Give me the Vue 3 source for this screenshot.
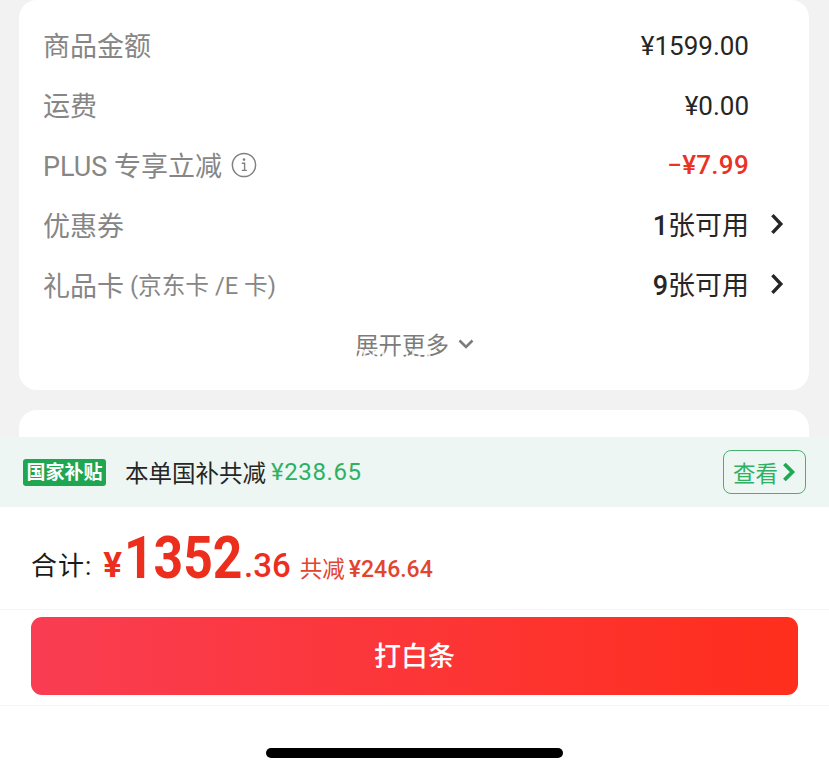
<template>
  <div class="page">
    <div class="card card--top">
      <div class="row" v-for="item in rows" :key="item.label">
        <span class="row__label">
          {{ item.label }}<small v-if="item.note" class="row__note">{{ item.note }}</small>
          <svg v-if="item.info" class="row__info" viewBox="0 0 26 26" width="26" height="26">
            <circle cx="13" cy="13" r="11.6" fill="none" stroke="#808080" stroke-width="1.5" />
            <circle cx="13" cy="7.6" r="1.3" fill="#808080" />
            <path d="M10.8 11.2h2.8v7M10.8 18.4h5" fill="none" stroke="#808080" stroke-width="1.4" />
          </svg>
        </span>
        <span class="row__value" :class="{ 'row__value--red': item.red, 'row__value--link': item.link }">
          <b v-if="item.num" class="row__num">{{ item.num }}</b>{{ item.value }}
          <svg v-if="item.link" class="row__arrow" viewBox="0 0 14 22" width="14" height="22">
            <path d="M2.4 2.2 10.8 11l-8.4 8.8" fill="none" stroke="#262626" stroke-width="3.4" />
          </svg>
        </span>
      </div>
      <div class="more">
        <span>展开更多</span>
        <svg viewBox="0 0 16 10" width="16" height="10">
          <path d="M1.5 1.5 8 8l6.5-6.5" fill="none" stroke="#7c7c7c" stroke-width="2.6" />
        </svg>
        <span class="more__mark">PTUDIO</span>
      </div>
    </div>

    <div class="card card--next"></div>

    <div class="subsidy">
      <span class="subsidy__tag">国家补贴</span>
      <span class="subsidy__text">本单国补共减</span>
      <span class="subsidy__amount">¥238.65</span>
      <span class="subsidy__btn">
        查看
        <svg viewBox="0 0 14 20" width="14" height="20">
          <path d="M2.4 2 10.4 10l-8 8" fill="none" stroke="#1ea952" stroke-width="3.8" />
        </svg>
      </span>
    </div>

    <div class="total">
      <span class="total__label">合计:</span>
      <span class="total__yen">¥</span>
      <span class="total__int">1352</span>
      <span class="total__dec">.36</span>
      <span class="total__off">共减</span>
      <span class="total__offnum">¥246.64</span>
    </div>

    <div class="action">
      <button class="pay">打白条</button>
    </div>

    <div class="home">
      <div class="home__bar"></div>
    </div>
  </div>
</template>

<script setup>
const rows = [
  { label: "商品金额", value: "¥1599.00" },
  { label: "运费", value: "¥0.00" },
  { label: "PLUS 专享立减", value: "−¥7.99", red: true, info: true },
  { label: "优惠券", num: "1", value: "张可用", link: true },
  { label: "礼品卡", note: " (京东卡 /E 卡)", num: "9", value: "张可用", link: true },
];
</script>

<style>
html,
body {
  margin: 0;
  background: #fff;
}
</style>

<style scoped>
.page {
  width: 829px;
  height: 773px;
  overflow: hidden;
  display: flex;
  flex-direction: column;
  background: #f2f2f2;
  font-family: "Roboto", "Noto Sans CJK SC", sans-serif;
}

.card {
  margin: 0 20px 0 19px;
  background: #fff;
}

.card--top {
  height: 390px;
  box-sizing: border-box;
  padding-top: 16px;
  border-radius: 18px;
}

.card--next {
  height: 27px;
  margin-top: 20px;
  border-radius: 18px 18px 0 0;
}

.row {
  height: 59.8px;
  display: flex;
  align-items: center;
  justify-content: space-between;
  padding: 0 60px 0 24px;
}

.row__label {
  display: flex;
  align-items: center;
  margin-top: -2px;
  font-size: 27px;
  color: #868686;
  white-space: pre;
}

.row__note {
  font-size: 23.7px;
  color: #868686;
}

.row__info {
  margin: 2px 0 0 9px;
}

.row__value {
  position: relative;
  font-size: 26px;
  color: #262626;
}

.row__value--red {
  color: #e93323;
  font-weight: 500;
  letter-spacing: 0.3px;
}

.row__value--link {
  margin-top: -3px;
  font-size: 27px;
}

.row__num {
  font-weight: 500;
}

.row__arrow {
  position: absolute;
  right: -35px;
  top: 9px;
}

.more {
  position: relative;
  display: flex;
  align-items: center;
  justify-content: center;
  gap: 9px;
  margin: 11px 0 0 1px;
  height: 36px;
  font-size: 23.5px;
  color: #7c7c7c;
}

.more__mark {
  position: absolute;
  left: 333px;
  top: 19px;
  font-size: 21px;
  letter-spacing: 1px;
  color: rgba(255, 255, 255, 0.9);
}

.subsidy {
  height: 70px;
  flex: none;
  display: flex;
  align-items: center;
  padding: 0 23px;
  background: #edf6f2;
}

.subsidy__tag {
  width: 83px;
  height: 27px;
  margin-right: 19px;
  border-radius: 3px;
  background: #1fa650;
  color: #fff;
  font-size: 19px;
  font-weight: 700;
  line-height: 27px;
  text-align: center;
}

.subsidy__text {
  font-size: 23.5px;
  color: #262626;
}

.subsidy__amount {
  margin-left: 5px;
  font-size: 24px;
  letter-spacing: 0.6px;
  color: #2fb063;
}

.subsidy__btn {
  display: flex;
  align-items: center;
  justify-content: center;
  gap: 4px;
  box-sizing: border-box;
  width: 83px;
  height: 44px;
  margin-left: auto;
  border: 1.5px solid #48b073;
  border-radius: 8px;
  font-size: 22.5px;
  color: #2fb063;
}

.total {
  height: 103px;
  flex: none;
  box-sizing: border-box;
  display: flex;
  align-items: baseline;
  padding: 14px 0 0 31px;
  background: #fff;
  border-bottom: 1px solid #f5f5f5;
  color: #ec2e1d;
}

.total__label {
  font-size: 26px;
  letter-spacing: 1px;
  color: #1a1a1a;
  transform: translateY(-2px);
}

.total__yen {
  margin-left: 11px;
  font-size: 35px;
  font-weight: 700;
}

.total__int {
  display: inline-block;
  width: 120px;
  margin-left: 2px;
  font-size: 60px;
  font-weight: 700;
  transform: translateY(1px) scaleX(0.86);
  transform-origin: left;
}

.total__dec {
  font-size: 33px;
  font-weight: 500;
}

.total__off {
  margin-left: 9px;
  font-size: 22.5px;
  color: #e2452f;
}

.total__offnum {
  margin-left: 4px;
  font-size: 23px;
  font-weight: 500;
  color: #e2452f;
}

.action {
  height: 96px;
  flex: none;
  box-sizing: border-box;
  padding: 7px 31px 0;
  background: #fff;
  border-bottom: 1px solid #f5f5f5;
}

.pay {
  display: block;
  width: 100%;
  height: 78px;
  padding: 0 0 3px;
  border: 0;
  border-radius: 11px;
  background: linear-gradient(90deg, #f93d52 0%, #ff2e1c 100%);
  color: #fff;
  font-family: inherit;
  font-size: 27px;
  font-weight: 500;
}

.home {
  flex: 1;
  display: flex;
  justify-content: center;
  padding-top: 42px;
  background: #fff;
}

.home__bar {
  width: 297px;
  height: 10px;
  border-radius: 5px;
  background: #000;
}
</style>
